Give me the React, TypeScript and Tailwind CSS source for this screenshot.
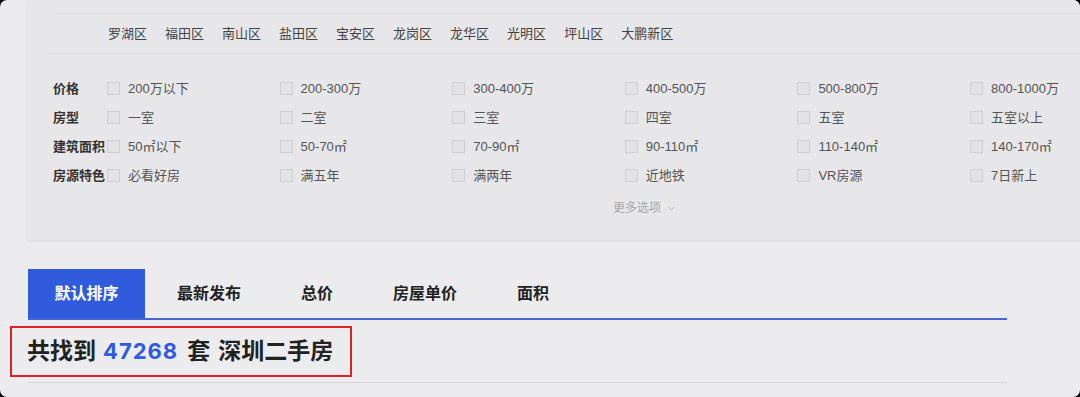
import React from 'react'
import { ChevronDown } from 'lucide-react'

const districts = ['罗湖区', '福田区', '南山区', '盐田区', '宝安区', '龙岗区', '龙华区', '光明区', '坪山区', '大鹏新区']

const filters: { label: string, options: string[] }[] = [
  { label: '价格', options: ['200万以下', '200-300万', '300-400万', '400-500万', '500-800万', '800-1000万'] },
  { label: '房型', options: ['一室', '二室', '三室', '四室', '五室', '五室以上'] },
  { label: '建筑面积', options: ['50㎡以下', '50-70㎡', '70-90㎡', '90-110㎡', '110-140㎡', '140-170㎡'] },
  { label: '房源特色', options: ['必看好房', '满五年', '满两年', '近地铁', 'VR房源', '7日新上'] },
]

const tabs = ['最新发布', '总价', '房屋单价', '面积']

function App() {
  return (
    <div className="w-[1080px] h-[397px] bg-black overflow-hidden">
      <div
        className="w-full h-full rounded-[7px] bg-[#ececee] overflow-hidden"
        style={{ fontFamily: '"Liberation Sans", "Noto Sans CJK SC", sans-serif' }}
      >
        {/* Filter panel */}
        <div className="ml-[27px] h-[240px] bg-[#e7e7e9] shadow-[0_1px_2px_rgba(0,0,0,0.08)] flex flex-col">
          <div className="ml-[28px] mt-[13px] border-t border-[#dcdcde]" />
          <div className="h-[39px] flex items-center pl-[81px] gap-[18px] text-[13px] text-[#444]">
            {districts.map(d => <span key={d}>{d}</span>)}
          </div>
          <div className="ml-[21px] border-t border-[#dcdcde]" />

          <div className="mt-[20px] flex flex-col">
            {filters.map(f => (
              <div key={f.label} className="h-[29px] flex items-center">
                <span className="w-[80px] pl-[26px] shrink-0 text-[13px] font-bold text-[#333]">{f.label}</span>
                {f.options.map(o => (
                  <div key={o} className="w-[172.6px] shrink-0 flex items-center">
                    <span className="w-[13px] h-[13px] border border-[#cfcfd1] bg-[#e3e3e5] shrink-0" />
                    <span className="ml-[8px] text-[13px] text-[#555]">{o}</span>
                  </div>
                ))}
              </div>
            ))}
          </div>

          <div className="mt-[9px] ml-[586px] flex items-center gap-[5px] text-[12px] text-[#a8a8ab]">
            <span>更多选项</span>
            <ChevronDown size={11} strokeWidth={1.5} />
          </div>
        </div>

        {/* Sort tabs */}
        <div className="ml-[28px] w-[979px] mt-[29px]">
          <div className="flex items-center h-[49px]">
            <div className="w-[117px] h-full bg-[#2f5bdc] text-white text-[16px] font-bold flex items-center justify-center">
              默认排序
            </div>
            <div className="ml-[32px] flex items-center gap-[60px] text-[16px] font-bold text-[#222]">
              {tabs.map(t => <span key={t}>{t}</span>)}
            </div>
          </div>
          <div className="h-[2px] bg-[#4864d6]" />
        </div>

        {/* Result count */}
        <div className="flex items-start">
          <div className="ml-[10px] mt-[6px] w-[342px] h-[51px] border-[2.5px] border-[#e0202a] flex items-center pl-[15px]">
            <span className="text-[23px] font-bold text-[#222] flex items-center">
              <span>共找到</span>
              <span className="ml-[7px] text-[22px] text-[#2f5bdc] tracking-[1px]" style={{ fontFamily: 'Inter, sans-serif' }}>47268</span>
              <span className="ml-[9px]">套</span>
              <span className="ml-[8px]">深圳二手房</span>
            </span>
          </div>
        </div>
        <div className="ml-[28px] w-[979px] mt-[5px] border-t border-[#d6d6d8]" />
      </div>
    </div>
  )
}

export default App
